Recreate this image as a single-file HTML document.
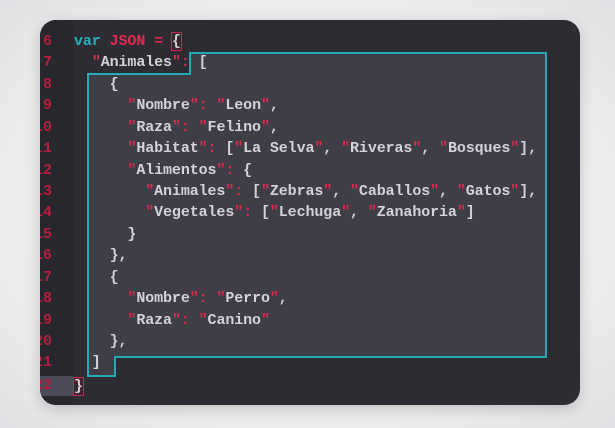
<!DOCTYPE html>
<html><head><meta charset="utf-8"><style>
html,body{margin:0;padding:0;width:615px;height:428px;overflow:hidden;background:radial-gradient(ellipse at 50% 50%,#fafafb 0%,#ececee 70%,#e2e2e5 100%);}
.box{position:absolute;left:40px;top:20px;width:540px;height:385px;background:#2d2c33;border-radius:16px;box-shadow:0 4px 14px rgba(0,0,0,.18);overflow:hidden;}
.gut{position:absolute;left:0;top:0;width:33px;height:385px;background:#28272e;}
.hl{position:absolute;left:0;top:356px;width:33px;height:20px;background:#4b4a58;}
svg{position:absolute;left:0;top:0}
.l{position:absolute;left:0;height:21px;line-height:21px;font-family:"Liberation Mono",monospace;font-size:15px;letter-spacing:-0.1px;font-weight:bold;color:#d2d3d8;white-space:pre;}
.n{position:absolute;left:-8px;width:20px;text-align:right;height:21px;line-height:21px;font-family:"Liberation Mono",monospace;font-size:15px;font-weight:bold;color:#b3203f;}
.r{color:#e0294f}.c{color:#2bb1bb}
.cur{outline:1.5px solid #c8284c;background:#3a2530}
</style></head><body>
<div class="box">
<div class="gut"></div><div class="hl"></div>
<svg width="540" height="385"><path d="M150 33 H506 V337 H75 V356 H48 V54 H150 Z" fill="#3f3e46" stroke="#24a9b6" stroke-width="2"/></svg>
</div>
<div style="position:absolute;left:40px;top:20px;width:540px;height:385px;overflow:hidden;border-radius:16px">
<div class="n" style="top:11px">6</div><div class="n" style="top:32px">7</div><div class="n" style="top:54px">8</div><div class="n" style="top:75px">9</div><div class="n" style="top:97px">10</div><div class="n" style="top:118px">11</div><div class="n" style="top:140px">12</div><div class="n" style="top:161px">13</div><div class="n" style="top:182px">14</div><div class="n" style="top:204px">15</div><div class="n" style="top:225px">16</div><div class="n" style="top:247px">17</div><div class="n" style="top:268px">18</div><div class="n" style="top:290px">19</div><div class="n" style="top:311px">20</div><div class="n" style="top:332px">21</div><div class="n" style="top:355px">22</div>
</div>
<div style="position:absolute;left:74px;top:31px">
<div class="l" style="top:0"><span class="c">var</span> <span class="r">JSON = </span><span class="cur">{</span></div>
<div class="l" style="top:21px">  <span class="r">"</span>Animales<span class="r">":</span> [</div>
<div class="l" style="top:43px">    {</div>
<div class="l" style="top:64px">      <span class="r">"</span>Nombre<span class="r">": "</span>Leon<span class="r">"</span>,</div>
<div class="l" style="top:86px">      <span class="r">"</span>Raza<span class="r">": "</span>Felino<span class="r">"</span>,</div>
<div class="l" style="top:107px">      <span class="r">"</span>Habitat<span class="r">":</span> [<span class="r">"</span>La Selva<span class="r">"</span>, <span class="r">"</span>Riveras<span class="r">"</span>, <span class="r">"</span>Bosques<span class="r">"</span>],</div>
<div class="l" style="top:129px">      <span class="r">"</span>Alimentos<span class="r">":</span> {</div>
<div class="l" style="top:150px">        <span class="r">"</span>Animales<span class="r">":</span> [<span class="r">"</span>Zebras<span class="r">"</span>, <span class="r">"</span>Caballos<span class="r">"</span>, <span class="r">"</span>Gatos<span class="r">"</span>],</div>
<div class="l" style="top:171px">        <span class="r">"</span>Vegetales<span class="r">":</span> [<span class="r">"</span>Lechuga<span class="r">"</span>, <span class="r">"</span>Zanahoria<span class="r">"</span>]</div>
<div class="l" style="top:193px">      }</div>
<div class="l" style="top:214px">    },</div>
<div class="l" style="top:236px">    {</div>
<div class="l" style="top:257px">      <span class="r">"</span>Nombre<span class="r">": "</span>Perro<span class="r">"</span>,</div>
<div class="l" style="top:279px">      <span class="r">"</span>Raza<span class="r">": "</span>Canino<span class="r">"</span></div>
<div class="l" style="top:300px">    },</div>
<div class="l" style="top:321px">  ]</div>
<div class="l" style="top:345px"><span class="cur">}</span></div>
</div>
</body></html>
